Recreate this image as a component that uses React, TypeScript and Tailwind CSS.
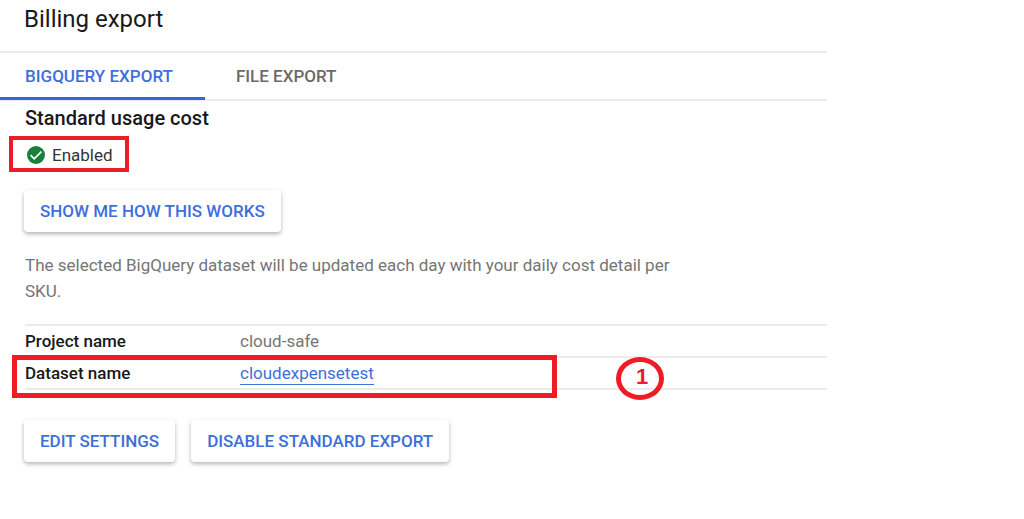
import { useState } from "react";
import type { ReactNode } from "react";

const TABS = ["BIGQUERY EXPORT", "FILE EXPORT"];

const App = () => {
	const [activeTab, setActiveTab] = useState(TABS[0]);

	return (
		<main className="w-full max-w-[827px] bg-white font-[Roboto,sans-serif] text-[17px] leading-6 text-[#18191b]">
			<header className="h-[53px] border-b-2 border-[#ebebeb] px-6 pt-[3px]">
				<h1 className="text-[24px] leading-8">Billing export</h1>
			</header>

			<div role="tablist" className="flex h-12 border-b-2 border-[#ebebeb]">
				{TABS.map((tab) => (
					<Tab key={tab} label={tab} active={tab === activeTab} onSelect={() => setActiveTab(tab)} />
				))}
			</div>

			<section className="pr-6 pl-[25px]">
				<h2 className="pt-[3px] text-[20px] leading-7 font-medium">Standard usage cost</h2>

				<div className="mt-1 -ml-4 flex h-9 w-[120px] items-center gap-1.5 border-4 border-[#ee1c25] pt-0.5 pl-[13px]">
					<CheckIcon />
					<span className="text-[#333436]">Enabled</span>
				</div>

				<div className="mt-[18px] -ml-px">
					<RaisedButton>SHOW ME HOW THIS WORKS</RaisedButton>
				</div>

				<p className="mt-5 max-w-[660px] leading-[26px] text-[#757575]">
					The selected BigQuery dataset will be updated each day with your daily cost detail per SKU.
				</p>
			</section>

			<div className="relative mt-5 pl-[25px]">
				<table className="w-full border-collapse text-left">
					<tbody>
						<DetailRow label="Project name">
							<span className="text-[#757575]">cloud-safe</span>
						</DetailRow>
						<DetailRow label="Dataset name">
							<a href="#dataset" className="inline-block border-b border-[#3d6fdb] leading-[22px] text-[#3d6fdb]">
								cloudexpensetest
							</a>
						</DetailRow>
					</tbody>
				</table>
				<div className="pointer-events-none absolute top-[31px] left-3 h-[43px] w-[545px] border-5 border-[#ee1c25]" />
				<div className="pointer-events-none absolute top-[33px] left-[616px] flex h-[43px] w-12 items-center justify-center rounded-[50%] border-5 border-[#ee1c25] pb-1 pl-1 font-['Liberation_Sans',sans-serif] text-[22px] font-bold text-[#ee1c25]">
					1
				</div>
			</div>

			<div className="mt-[30px] flex gap-4 px-6 pb-14">
				<RaisedButton>EDIT SETTINGS</RaisedButton>
				<RaisedButton>DISABLE STANDARD EXPORT</RaisedButton>
			</div>
		</main>
	);
};

interface TabProps {
	label: string;
	active: boolean;
	onSelect: () => void;
}

const Tab = ({ label, active, onSelect }: TabProps) => (
	<button
		type="button"
		role="tab"
		aria-selected={active}
		onClick={onSelect}
		className={`-mb-px cursor-pointer border-b-3 pt-0.5 pr-8 font-medium ${
			active ? "border-[#3367d6] pl-[25px] text-[#3d6fdb]" : "border-transparent pl-[31px] text-[#6a6a6a]"
		}`}
	>
		{label}
	</button>
);

interface DetailRowProps {
	label: string;
	children: ReactNode;
}

const DetailRow = ({ label, children }: DetailRowProps) => (
	<tr className="h-8 border-y-2 border-[#ebebeb]">
		<th scope="row" className="w-[215px] p-0 font-medium">
			{label}
		</th>
		<td className="p-0">{children}</td>
	</tr>
);

const RaisedButton = ({ children }: { children: ReactNode }) => (
	<button
		type="button"
		className="h-[42px] cursor-pointer rounded bg-white px-4 font-medium text-[#3d6fdb] shadow-[0_2px_4px_rgba(0,0,0,0.3)]"
	>
		{children}
	</button>
);

const CheckIcon = () => (
	<svg viewBox="0 0 20 20" className="size-5 p-px" aria-hidden="true">
		<circle cx="10" cy="10" r="10" fill="#188038" />
		<path d="M4 10.2l4 4 8-8" fill="none" stroke="#fff" strokeWidth="2" />
	</svg>
);

export default App;
